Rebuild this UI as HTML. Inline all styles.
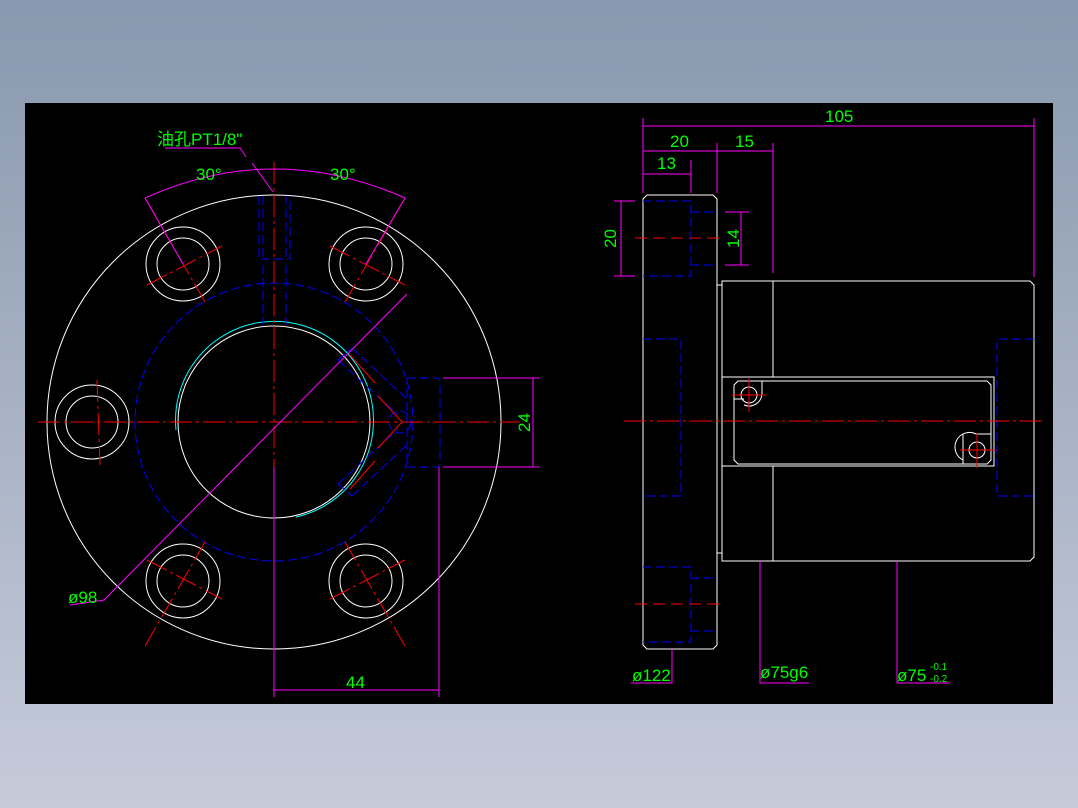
<!DOCTYPE html>
<html><head><meta charset="utf-8"><style>
html,body{margin:0;padding:0;width:1078px;height:808px;overflow:hidden;background:linear-gradient(#8898ae,#c6cbda);}
svg{position:absolute;left:0;top:0}
text{font-family:"Liberation Sans","Noto Sans CJK SC",sans-serif;fill:#00ff00;font-size:17px}
</style></head><body>
<svg width="1078" height="808" viewBox="0 0 1078 808">
<rect x="25" y="103" width="1028" height="601" fill="#000"/>
<g fill="none" stroke-width="1">
<!-- LEFT VIEW -->
<g stroke="#fff">
<circle cx="274" cy="422" r="227"/>
<circle cx="274" cy="422" r="96"/>
<circle cx="183" cy="264" r="37"/><circle cx="183" cy="264" r="26"/>
<circle cx="366" cy="264" r="37"/><circle cx="366" cy="264" r="26"/>
<circle cx="92" cy="422" r="37"/><circle cx="92" cy="422" r="26"/>
<circle cx="183" cy="581" r="37"/><circle cx="183" cy="581" r="26"/>
<circle cx="366" cy="581" r="37"/><circle cx="366" cy="581" r="26"/>
</g>
<path d="M176 430 A99 99 0 1 1 296 517" stroke="#00ffff"/>
<g stroke="#0000ff" stroke-dasharray="9 4">
<circle cx="274" cy="422" r="139"/>
<path d="M259 196V259H290V196M263 196V259M286 196V259M263 265V325M286 265V325"/>
<path d="M407 378H436Q440 378 440 382V463Q440 467 436 467H407V378"/>
<path d="M338 360L398 415M338 484L398 429M352 348L410 402M352 496L410 442M338 360L352 348M338 484L352 496"/>
<circle cx="400" cy="422" r="11"/>
</g>
<g stroke="#ff0000" stroke-dasharray="22 4 3 4">
<path d="M38 422H520M274 162V652"/>
<path d="M145 198L205 302M405 198L345 302M145 646L205 542M405 646L345 542"/>
<path d="M147 285L222 246M330 246L405 285M147 560L222 599M330 599L405 560M97 380L100 465"/>
</g>
<path d="M378 396L402 422L378 448M350 355L375 383M350 489L375 461" stroke="#ff0000"/>
<g stroke="#ff00ff">
<path d="M145 198Q274 140 405 198"/>
<path d="M145 198L183 264M405 198L366 264"/>
<path d="M165 148H240L246 157M252 163L273 192"/>
<path d="M407 294L104 600L70 605"/>
<path d="M443 378H540M443 467H540M533 378V467"/>
<path d="M274 467V697M439 467V697M274 690H439"/>
</g>
<text x="157" y="145">油孔PT1/8"</text>
<text x="196" y="180">30°</text><text x="330" y="180">30°</text>
<text x="68" y="603">ø98</text>
<text x="346" y="688">44</text>
<text transform="translate(530,432) rotate(-90)">24</text>
<!-- RIGHT VIEW -->
<g stroke="#fff">
<path d="M647 195H713L717 199V645L713 649H647L643 645V199Z"/>
<path d="M717 285H722M717 553H722"/>
<path d="M722 281H1030L1034 285V557L1030 561H722Z"/>
<path d="M773 281V377M773 466V561"/>
<rect x="722" y="377" width="272" height="89"/>
<path d="M738 381H987L991 385V460L987 464H738L734 460V385Z"/>
<path d="M734 399H744M762 381V394M976 434H991M963 434V464"/>
<circle cx="749" cy="395" r="8"/><circle cx="977" cy="450" r="8"/>
<path d="M744 405A13 13 0 0 0 762 394M963 460A13 13 0 0 1 976 434"/>
</g>
<g stroke="#0000ff" stroke-dasharray="9 4">
<path d="M643 201H691V276H643M691 212H717M691 265H717"/>
<path d="M643 339H681V496H643"/>
<path d="M643 567H691V642H643M691 578H717M691 631H717"/>
<path d="M1034 339H997V496H1034"/>
</g>
<g stroke="#ff0000" stroke-dasharray="12 6">
<path d="M635 238H725M635 604H725"/>
</g>
<path d="M624 421H1044" stroke="#ff0000" stroke-dasharray="22 4 3 4"/>
<path d="M732 395H766M749 378V412M960 450H995M977 433V468" stroke="#ff0000"/>
<g stroke="#ff00ff">
<path d="M643 118V193M1034 118V277M643 126H1034"/>
<path d="M717 143V193M773 143V273M643 151H773"/>
<path d="M691 160V193M643 174H691"/>
<path d="M614 201H635M614 276H635M621 201V276"/>
<path d="M725 212H749M725 265H749M741 212V265"/>
<path d="M672 649V683H631M760 561V683H809M897 561V683H950"/>
</g>
<text x="825" y="122">105</text>
<text x="670" y="147">20</text><text x="735" y="147">15</text>
<text x="657" y="169">13</text>
<text transform="translate(616,248) rotate(-90)">20</text>
<text transform="translate(739,248) rotate(-90)">14</text>
<text x="632" y="681">ø122</text>
<text x="760" y="678">ø75g6</text>
<text x="897" y="681">ø75</text>
<text x="930" y="670" style="font-size:10px">-0.1</text>
<text x="930" y="682" style="font-size:10px">-0.2</text>
</g>
</svg>
</body></html>
